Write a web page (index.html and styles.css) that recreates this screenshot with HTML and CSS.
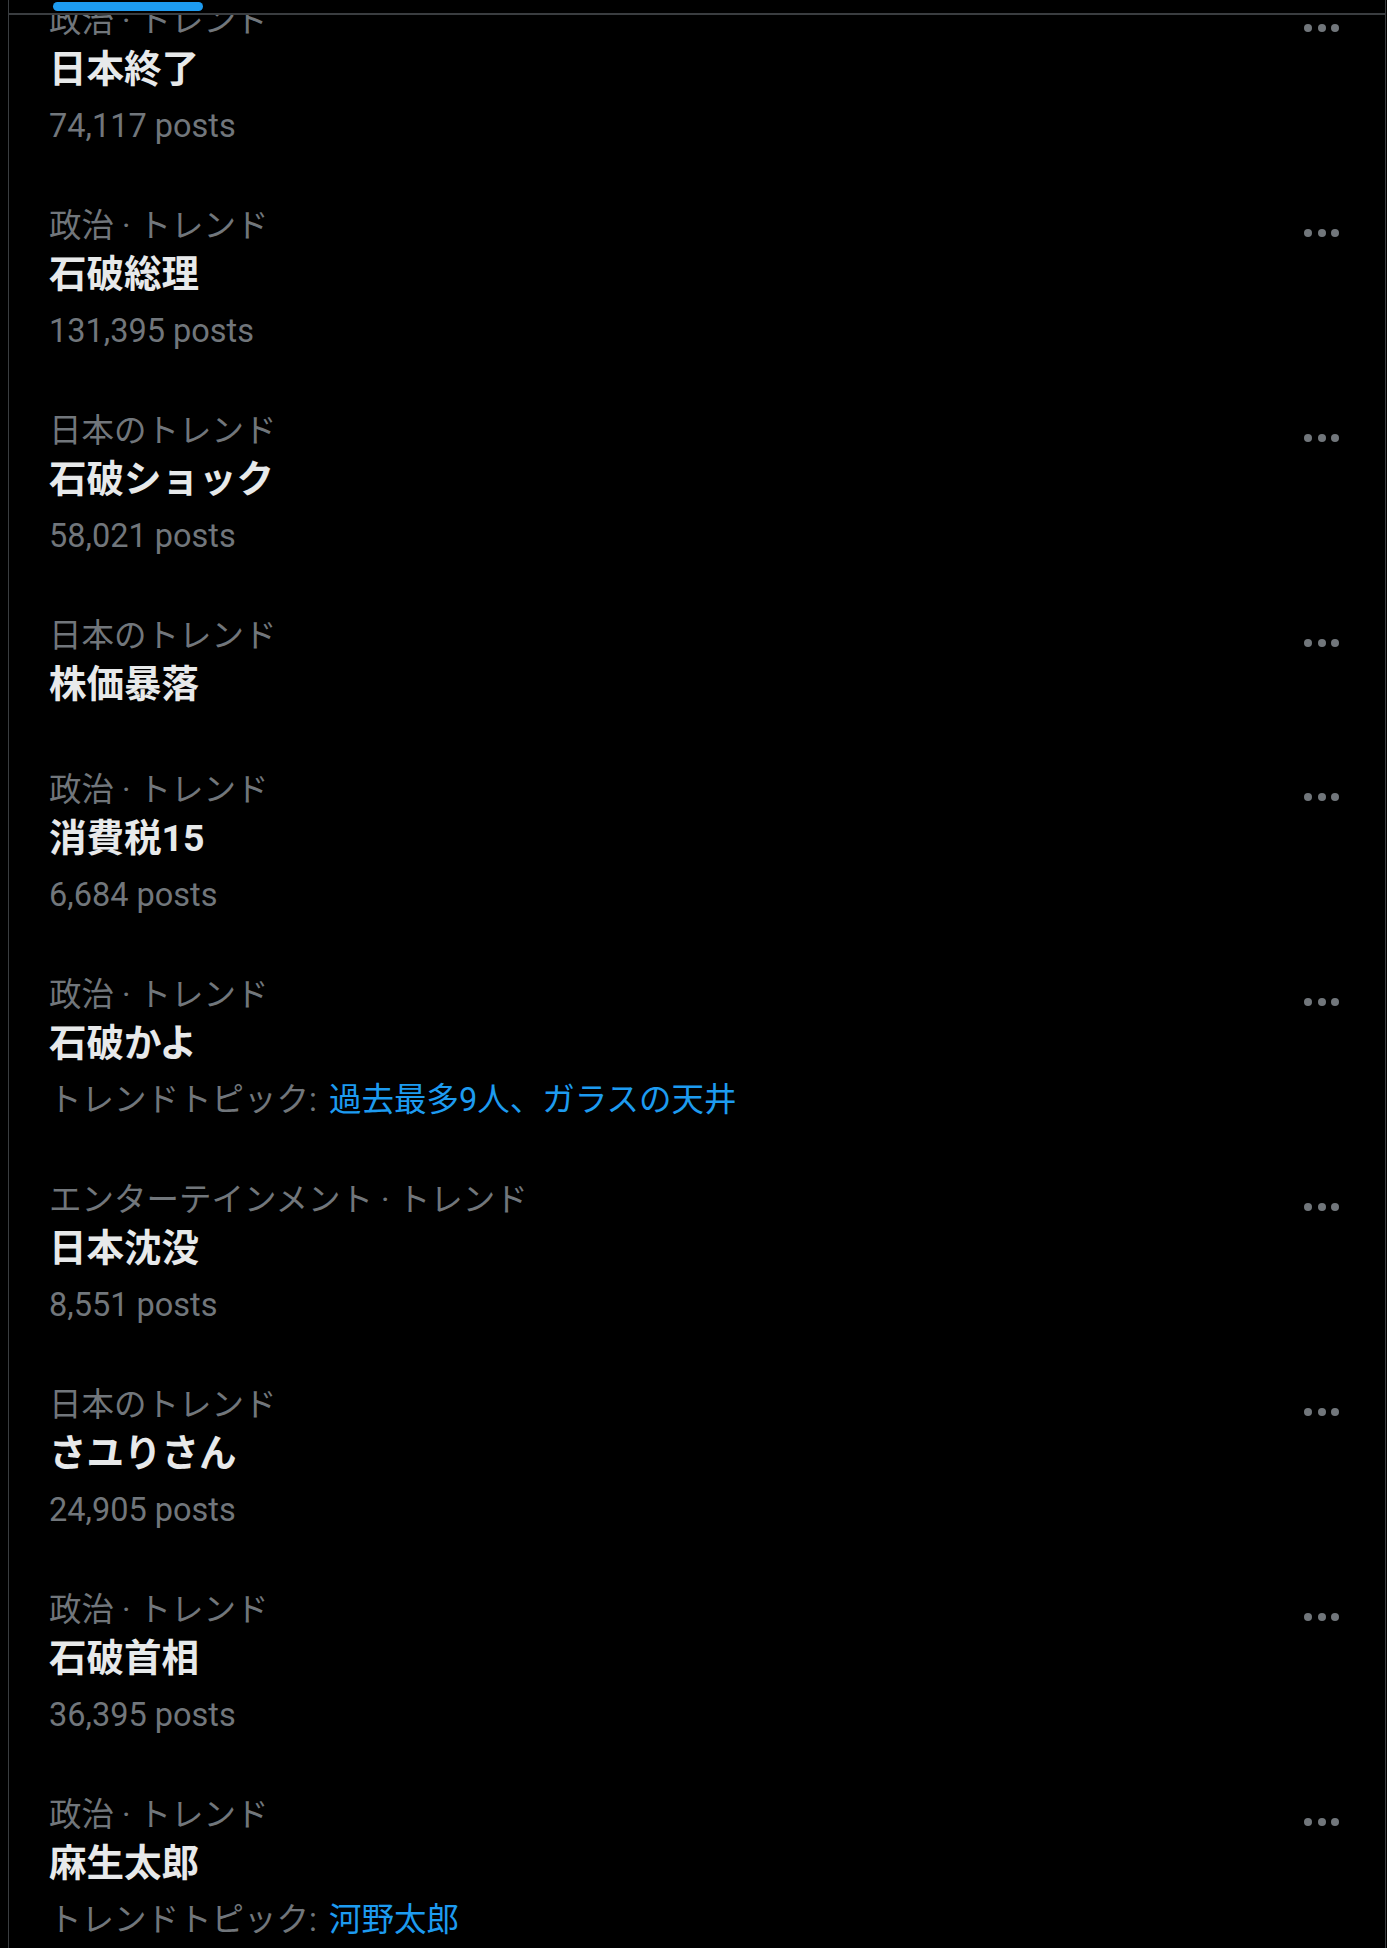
FILE: index.html
```html
<!DOCTYPE html>
<html lang="ja">
<head>
<meta charset="utf-8">
<title>トレンド</title>
<link rel="stylesheet" href="styles.css">
</head>
<body>
<div class="column">
  <div class="tabbar"><span class="indicator"></span></div>
  <div class="list">
    <div class="trend">
      <div class="trend-body">
        <div class="cat">政治 · トレンド</div>
        <div class="title">日本終了</div>
        <div class="meta">74,117 posts</div>
      </div>
      <div class="more"><span class="dot"></span><span class="dot"></span><span class="dot"></span></div>
    </div>
    <div class="trend">
      <div class="trend-body">
        <div class="cat">政治 · トレンド</div>
        <div class="title">石破総理</div>
        <div class="meta">131,395 posts</div>
      </div>
      <div class="more"><span class="dot"></span><span class="dot"></span><span class="dot"></span></div>
    </div>
    <div class="trend">
      <div class="trend-body">
        <div class="cat">日本のトレンド</div>
        <div class="title">石破ショック</div>
        <div class="meta">58,021 posts</div>
      </div>
      <div class="more"><span class="dot"></span><span class="dot"></span><span class="dot"></span></div>
    </div>
    <div class="trend">
      <div class="trend-body">
        <div class="cat">日本のトレンド</div>
        <div class="title">株価暴落</div>
      </div>
      <div class="more"><span class="dot"></span><span class="dot"></span><span class="dot"></span></div>
    </div>
    <div class="trend">
      <div class="trend-body">
        <div class="cat">政治 · トレンド</div>
        <div class="title">消費税15</div>
        <div class="meta">6,684 posts</div>
      </div>
      <div class="more"><span class="dot"></span><span class="dot"></span><span class="dot"></span></div>
    </div>
    <div class="trend">
      <div class="trend-body">
        <div class="cat">政治 · トレンド</div>
        <div class="title">石破かよ</div>
        <div class="meta">トレンドトピック: <span class="link">過去最多9人、ガラスの天井</span></div>
      </div>
      <div class="more"><span class="dot"></span><span class="dot"></span><span class="dot"></span></div>
    </div>
    <div class="trend">
      <div class="trend-body">
        <div class="cat">エンターテインメント · トレンド</div>
        <div class="title">日本沈没</div>
        <div class="meta">8,551 posts</div>
      </div>
      <div class="more"><span class="dot"></span><span class="dot"></span><span class="dot"></span></div>
    </div>
    <div class="trend">
      <div class="trend-body">
        <div class="cat">日本のトレンド</div>
        <div class="title">さユりさん</div>
        <div class="meta">24,905 posts</div>
      </div>
      <div class="more"><span class="dot"></span><span class="dot"></span><span class="dot"></span></div>
    </div>
    <div class="trend">
      <div class="trend-body">
        <div class="cat">政治 · トレンド</div>
        <div class="title">石破首相</div>
        <div class="meta">36,395 posts</div>
      </div>
      <div class="more"><span class="dot"></span><span class="dot"></span><span class="dot"></span></div>
    </div>
    <div class="trend">
      <div class="trend-body">
        <div class="cat">政治 · トレンド</div>
        <div class="title">麻生太郎</div>
        <div class="meta">トレンドトピック: <span class="link">河野太郎</span></div>
      </div>
      <div class="more"><span class="dot"></span><span class="dot"></span><span class="dot"></span></div>
    </div>
  </div>
</div>
</body>
</html>
```
FILE: styles.css
```css
html, body {
  margin: 0;
  padding: 0;
  background: #000;
}

body {
  font-family: Roboto, "Noto Sans CJK JP", sans-serif;
  color: #e7e9ea;
}

.column {
  position: relative;
  margin-left: 8px;
  width: 1378px;
  height: 1948px;
  box-sizing: border-box;
  border-left: 1px solid #3a3d40;
  border-right: 1px solid #3a3d40;
  overflow: hidden;
}

.tabbar {
  position: absolute;
  top: 0;
  left: 0;
  right: 0;
  height: 13px;
  background: #000;
  border-bottom: 2px solid #3a3d40;
  z-index: 2;
}

.indicator {
  position: absolute;
  left: 44px;
  top: 2px;
  width: 150px;
  height: 9px;
  border-radius: 5px;
  background: #1d9bf0;
}

.list {
  margin-top: -29px;
}

.trend {
  display: flex;
  align-items: flex-start;
  padding: 31px 46px 32px 40px;
}

.trend-body {
  flex: 1;
  min-width: 0;
}

.cat {
  font-size: 32.5px;
  line-height: 38px;
  color: #71767b;
}

.title {
  padding-top: 5px;
  font-size: 37.5px;
  line-height: 48px;
  font-weight: 700;
  color: #e7e9ea;
}

.meta {
  margin-top: 15px;
  font-size: 32.5px;
  line-height: 36px;
  color: #71767b;
}

.link {
  margin-left: 4px;
  color: #1d9bf0;
}

.more {
  display: flex;
  gap: 5.5px;
  margin-top: 22px;
}

.dot {
  width: 8px;
  height: 8px;
  border-radius: 50%;
  background: #71767b;
}
```
